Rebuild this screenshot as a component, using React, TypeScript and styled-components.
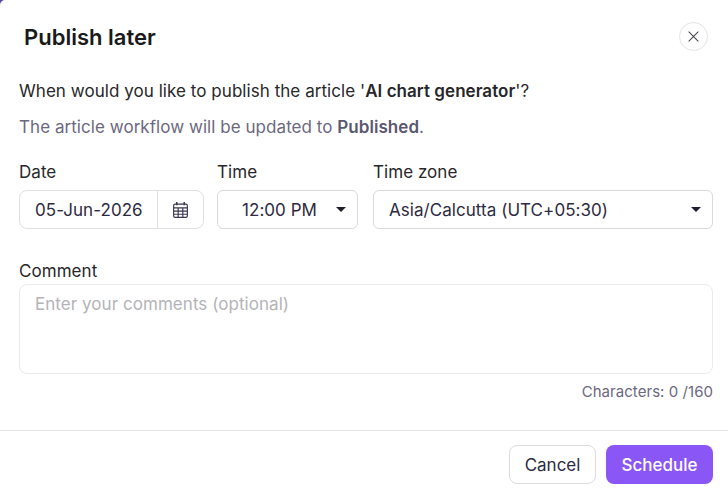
import React from 'react';
import styled, { createGlobalStyle } from 'styled-components';

const GlobalStyle = createGlobalStyle`
  html, body {
    margin: 0;
    padding: 0;
    background: #5b3fa8;
  }
  body {
    font-family: Inter, "Liberation Sans", sans-serif;
    letter-spacing: 0.05px;
  }
`;

const Dialog = styled.div`
  width: 728px;
  height: 492px;
  box-sizing: border-box;
  background: #fff;
  border-radius: 5px 0 0 0;
  display: flex;
  flex-direction: column;
  overflow: hidden;
`;

const Header = styled.div`
  height: 79px;
  box-sizing: border-box;
  padding: 22px 20px 0 24px;
  display: flex;
  align-items: flex-start;
  justify-content: space-between;
`;

const Title = styled.h2`
  margin: 0;
  font-size: 22px;
  line-height: 30px;
  font-weight: 600;
  letter-spacing: 0;
  color: #1a1a1a;
`;

const CloseButton = styled.button`
  width: 29px;
  height: 29px;
  padding: 0;
  border: 1px solid #e4e4e7;
  border-radius: 50%;
  background: #fff;
  color: #3f3f46;
  display: flex;
  align-items: center;
  justify-content: center;
`;

const Body = styled.div`
  flex: 1;
  padding: 0 15px 0 19px;
`;

const Message = styled.p`
  margin: 0 0 12px;
  font-size: 17px;
  line-height: 24px;
  color: #27272a;

  b {
    font-weight: 600;
  }
`;

const Note = styled(Message)`
  margin-bottom: 21px;
  color: #6b6880;

  b {
    color: #5a5770;
  }
`;

const FieldRow = styled.div`
  display: flex;
`;

const Field = styled.div<{ $width: number; $gap: number }>`
  width: ${({ $width }) => $width}px;
  margin-right: ${({ $gap }) => $gap}px;
`;

const Label = styled.div`
  font-size: 17px;
  line-height: 24px;
  height: 24px;
  margin-bottom: 6px;
  color: #27272a;
`;

const DateBox = styled.div`
  height: 39px;
  box-sizing: border-box;
  border: 1px solid #e0e0e4;
  border-radius: 8px;
  display: flex;
  align-items: center;
`;

const DateValue = styled.div`
  width: 137px;
  box-sizing: border-box;
  padding-left: 15px;
  font-size: 17px;
  white-space: nowrap;
  color: #2d2a42;
`;

const CalendarButton = styled.div`
  flex: 1;
  align-self: stretch;
  border-left: 1px solid #e0e0e4;
  display: flex;
  align-items: center;
  justify-content: center;
  color: #3a3750;
`;

const SelectBox = styled.div<{ $padLeft: number }>`
  height: 39px;
  box-sizing: border-box;
  border: 1px solid #d9d9de;
  border-radius: 6px;
  padding: 0 11px 0 ${({ $padLeft }) => $padLeft}px;
  display: flex;
  align-items: center;
  justify-content: space-between;
  font-size: 17px;
  white-space: nowrap;
  color: #2d2a42;
`;

const Caret = styled.span`
  width: 0;
  height: 0;
  border-left: 5px solid transparent;
  border-right: 5px solid transparent;
  border-top: 5px solid #1f1d2e;
`;

const CommentField = styled.div`
  margin-top: 30px;
`;

const CommentLabel = styled(Label)`
  height: 24px;
  margin-bottom: 1px;
`;

const CommentBox = styled.div`
  height: 90px;
  box-sizing: border-box;
  border: 1px solid #ebebee;
  border-radius: 8px;
  padding: 7px 15px;
  font-size: 17px;
  line-height: 24px;
  color: #b4b4b8;
`;

const Counter = styled.div`
  margin-top: 8px;
  text-align: right;
  font-size: 15px;
  line-height: 20px;
  color: #6b6880;
`;

const Footer = styled.div`
  height: 62px;
  box-sizing: border-box;
  border-top: 1px solid #e4e4e7;
  padding: 14px 15px 0 0;
  display: flex;
  justify-content: flex-end;
  gap: 10px;
`;

const CancelButton = styled.button`
  width: 87px;
  height: 39px;
  box-sizing: border-box;
  border: 1px solid #dcdce0;
  border-radius: 8px;
  background: #fff;
  font: 400 17px Inter, "Liberation Sans", sans-serif;
  color: #2d2a42;
`;

const ScheduleButton = styled.button`
  width: 107px;
  height: 39px;
  border: 0;
  border-radius: 8px;
  background: #8b56f6;
  font: 500 17px Inter, "Liberation Sans", sans-serif;
  color: #fff;
`;

const CloseIcon = () => (
  <svg width="11" height="11" viewBox="0 0 12 12" fill="none" stroke="currentColor" strokeWidth="1.1" strokeLinecap="round">
    <path d="M1 1l10 10M11 1L1 11" />
  </svg>
);

const CalendarIcon = () => (
  <svg width="17" height="18" viewBox="0 0 16 17" fill="none" stroke="currentColor" strokeWidth="1.1">
    <rect x="1.5" y="3" width="13" height="12.5" rx="1.5" />
    <path d="M1.5 6.5h13M1.5 9.5h13M1.5 12.5h13M5.8 6.5v9M10.2 6.5v9" />
    <path d="M4.5 1v3M11.5 1v3" strokeWidth="1.4" />
  </svg>
);

export default function App() {
  return (
    <>
      <GlobalStyle />
      <Dialog>
        <Header>
          <Title>Publish later</Title>
          <CloseButton aria-label="Close">
            <CloseIcon />
          </CloseButton>
        </Header>
        <Body>
          <Message>
            When would you like to publish the article '<b>AI chart generator</b>'?
          </Message>
          <Note>
            The article workflow will be updated to <b>Published</b>.
          </Note>
          <FieldRow>
            <Field $width={185} $gap={13}>
              <Label>Date</Label>
              <DateBox>
                <DateValue>05-Jun-2026</DateValue>
                <CalendarButton>
                  <CalendarIcon />
                </CalendarButton>
              </DateBox>
            </Field>
            <Field $width={141} $gap={15}>
              <Label>Time</Label>
              <SelectBox $padLeft={24}>
                12:00 PM
                <Caret />
              </SelectBox>
            </Field>
            <Field $width={340} $gap={0}>
              <Label>Time zone</Label>
              <SelectBox $padLeft={15}>
                Asia/Calcutta (UTC+05:30)
                <Caret />
              </SelectBox>
            </Field>
          </FieldRow>
          <CommentField>
            <CommentLabel>Comment</CommentLabel>
            <CommentBox>Enter your comments (optional)</CommentBox>
            <Counter>Characters: 0 /160</Counter>
          </CommentField>
        </Body>
        <Footer>
          <CancelButton>Cancel</CancelButton>
          <ScheduleButton>Schedule</ScheduleButton>
        </Footer>
      </Dialog>
    </>
  );
}
